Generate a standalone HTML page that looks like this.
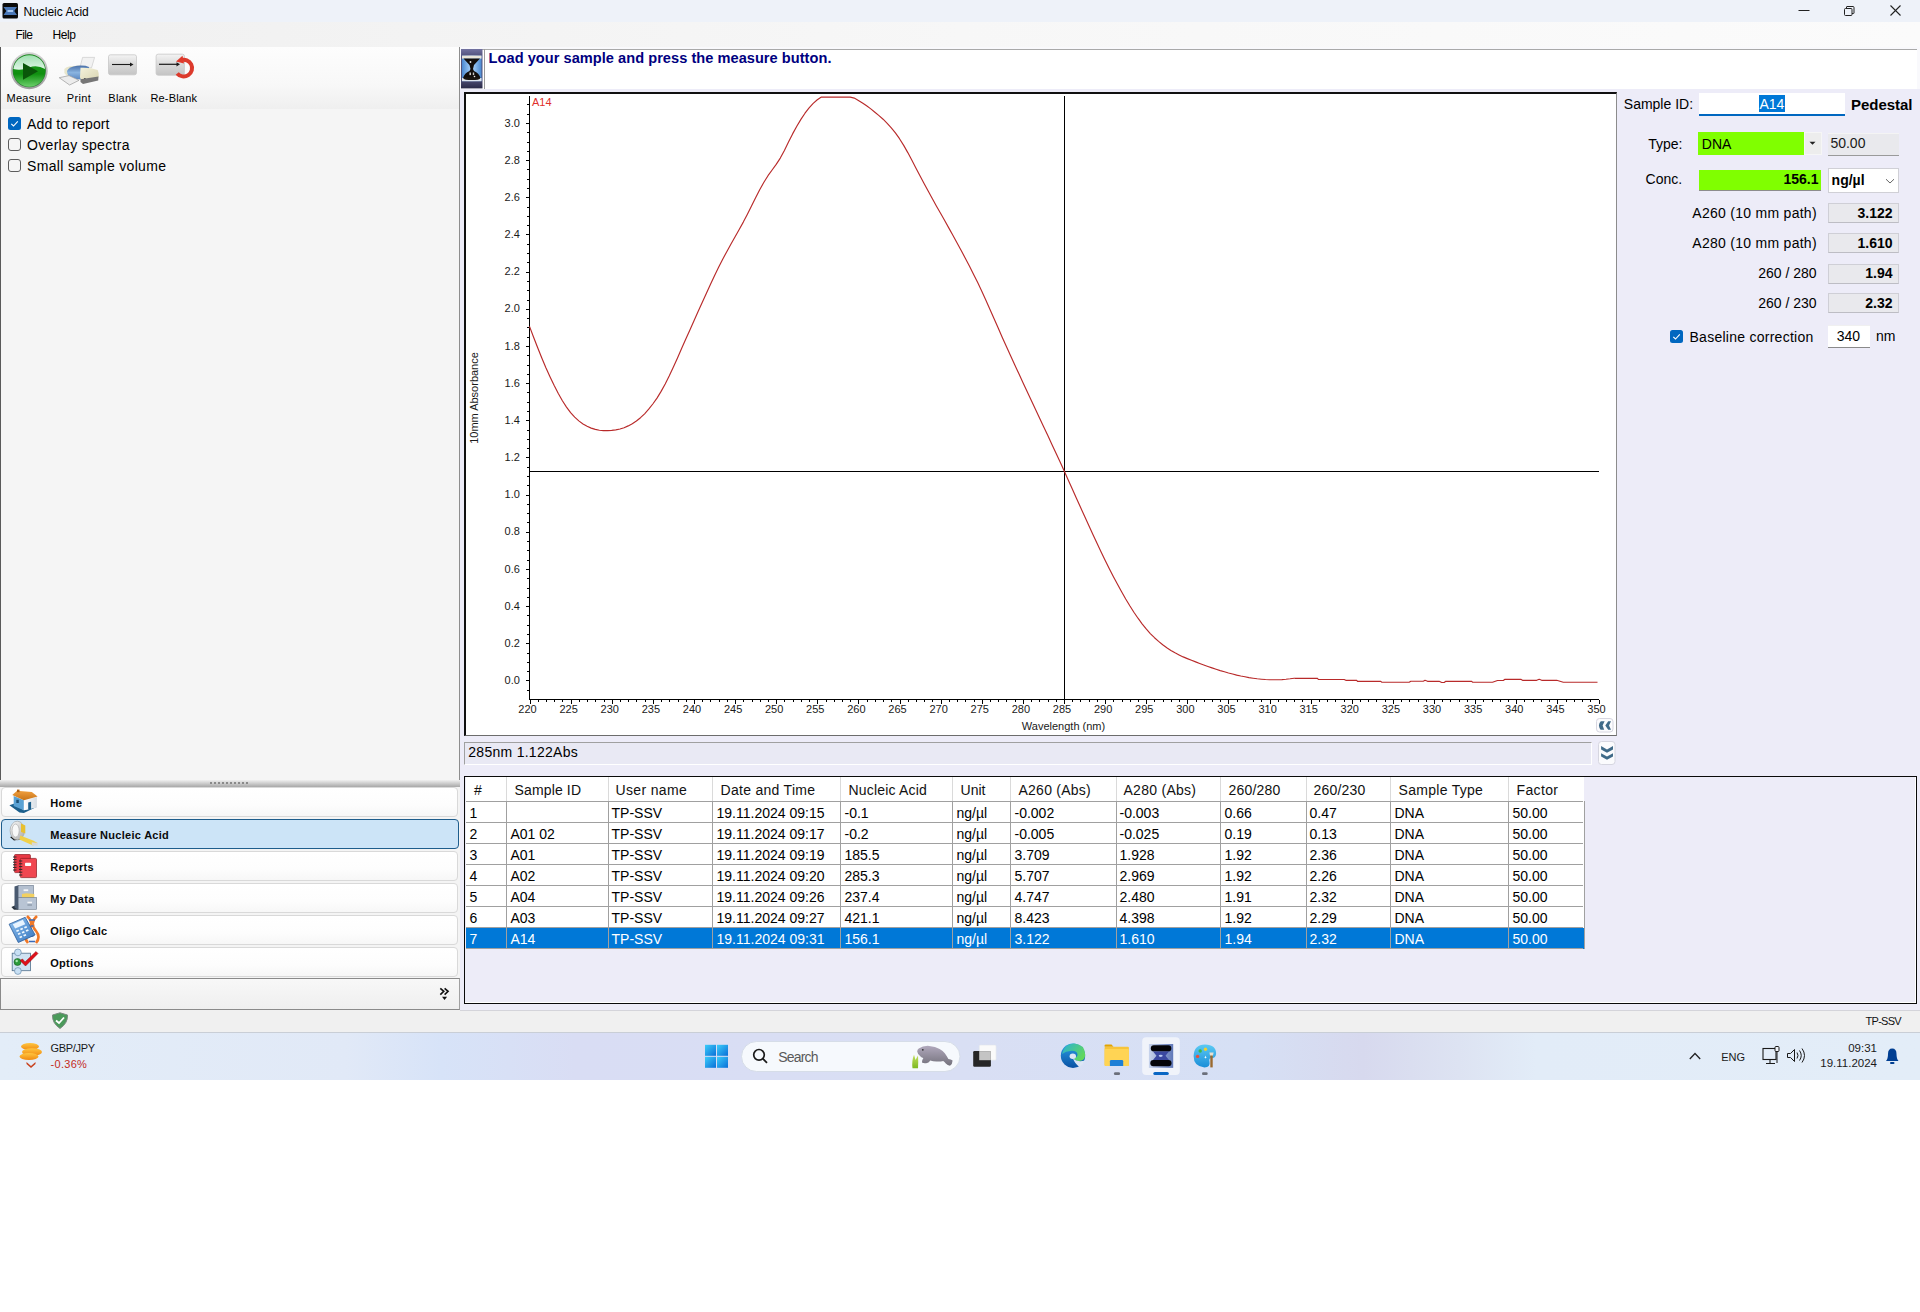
<!DOCTYPE html><html><head><meta charset="utf-8"><title>Nucleic Acid</title><style>
*{margin:0;padding:0;box-sizing:border-box}
html,body{width:1920px;height:1312px;background:#fff;overflow:hidden;font-family:"Liberation Sans",sans-serif;color:#000}
.t{position:absolute;white-space:nowrap}
.r{position:absolute}
svg{position:absolute;overflow:visible}
</style></head><body>
<div class="r" style="left:0px;top:0px;width:1920px;height:22px;background:#eef2f9"></div>
<svg style="left:0;top:0" width="30" height="22"><rect x="2.5" y="3" width="15.5" height="15.5" rx="1.5" fill="#0a0a0a"/>
<path d="M3.5 7 L17 7 L14.5 10.5 L14.5 11.5 L17 15 L3.5 15 L6 11.5 L6 10.5 Z" fill="#4a78b8"/>
<rect x="7.5" y="10" width="5.5" height="2" fill="#a8c8f0"/></svg>
<div class="t" style="top:5.74px;font-size:12px;line-height:12px;left:23.40px;">Nucleic Acid</div>
<svg style="left:1780px;top:0" width="140" height="22">
<line x1="18.5" y1="10.5" x2="29.5" y2="10.5" stroke="#222" stroke-width="1"/>
<rect x="64.5" y="8.5" width="7.5" height="7" rx="1" fill="none" stroke="#222" stroke-width="1"/>
<path d="M66.5 8.5 V7 Q66.5 6.5 67 6.5 H73 Q74 6.5 74 7.5 V13 Q74 13.5 73.5 13.5 H72" fill="none" stroke="#222" stroke-width="1"/>
<line x1="110.5" y1="5.5" x2="120.5" y2="15.5" stroke="#222" stroke-width="1.1"/>
<line x1="120.5" y1="5.5" x2="110.5" y2="15.5" stroke="#222" stroke-width="1.1"/>
</svg>
<div class="r" style="left:0px;top:22px;width:1920px;height:25px;background:linear-gradient(90deg,#f0f0f0 0%,#f7f7f7 50%,#fbfbfb 100%)"></div>
<div class="t" style="top:28.59px;font-size:12px;line-height:12px;letter-spacing:-0.645px;left:15.60px;">File</div>
<div class="t" style="top:28.59px;font-size:12px;line-height:12px;letter-spacing:-0.393px;left:52.50px;">Help</div>
<div class="r" style="left:0px;top:47px;width:460px;height:734px;background:#f5f5f5"></div>
<div class="r" style="left:0px;top:47px;width:459px;height:62px;background:linear-gradient(180deg,#fdfdfd 0%,#f8f8f8 60%,#efefef 100%)"></div>
<div class="r" style="left:0px;top:47px;width:1px;height:734px;background:#5a5a5a"></div>
<div class="r" style="left:459px;top:47px;width:1px;height:734px;background:#8e8e8e"></div>
<svg style="left:0;top:45px" width="210" height="50">
<defs>
<radialGradient id="gm" cx="0.5" cy="0.35" r="0.7"><stop offset="0" stop-color="#a8e8a8"/><stop offset="0.45" stop-color="#3cb83c"/><stop offset="1" stop-color="#118c11"/></radialGradient>
<linearGradient id="gb" x1="0" y1="0" x2="0" y2="1"><stop offset="0" stop-color="#f4f4f4"/><stop offset="0.5" stop-color="#d8d8d8"/><stop offset="1" stop-color="#c4c4c4"/></linearGradient>
</defs>
<defs>
<linearGradient id="ring" x1="0" y1="0" x2="0" y2="1"><stop offset="0" stop-color="#d4d4d4"/><stop offset="1" stop-color="#9c9c9c"/></linearGradient>
<linearGradient id="gtop" x1="0" y1="0" x2="0" y2="1"><stop offset="0" stop-color="#9fe0b0"/><stop offset="1" stop-color="#dff5e6"/></linearGradient>
<linearGradient id="gbot" x1="0" y1="0" x2="0" y2="1"><stop offset="0" stop-color="#1d9a1d"/><stop offset="0.6" stop-color="#109010"/><stop offset="1" stop-color="#6cd06c"/></linearGradient>
<linearGradient id="drum" x1="0" y1="0" x2="0" y2="1"><stop offset="0" stop-color="#4a70a8"/><stop offset="0.5" stop-color="#8ab4e0"/><stop offset="1" stop-color="#5a86c0"/></linearGradient>
<linearGradient id="cream" x1="0" y1="0" x2="1" y2="1"><stop offset="0" stop-color="#f4f2dc"/><stop offset="1" stop-color="#d8d4b0"/></linearGradient>
</defs>
<circle cx="29.25" cy="25.75" r="18.5" fill="url(#ring)"/>
<circle cx="29.25" cy="25.75" r="16.6" fill="#2c7e34"/>
<circle cx="29.25" cy="25.75" r="16" fill="url(#gbot)"/>
<path d="M13.4 24 A16 16 0 0 1 45.1 24 Q37 19.5 29.25 22.5 Q21 26 13.4 24 Z" fill="url(#gtop)"/>
<path d="M23 18.1 L38 26.3 L23 34.8 Z" fill="#0a560a"/>
<!-- printer -->
<path d="M82.6 12.4 L94.6 12.4 L91.5 22.8 L80 22.3 Z" fill="#f2f2f2" stroke="#c4c4c4" stroke-width="0.6"/>
<path d="M64.4 24 Q66 22 70 21.3 L80 20.5 L80.5 33 L70 32.5 Q65.5 30.5 64.4 28 Z" fill="#e8e6cc"/>
<path d="M67 26 Q69 21.5 77 20.7 Q85 20 89 22 L88.3 34.3 Q78 35.5 71 32.5 Q67 30.5 67 26 Z" fill="url(#drum)"/>
<path d="M80.5 22.8 Q90 22.3 97.7 24.9 Q99.2 28 98.75 32.2 L83.1 36.3 Q80 34.5 80 32.2 Z" fill="url(#cream)"/>
<path d="M80.5 34.2 L98.5 31.5 L98.2 35.5 L83 39 L80.5 37 Z" fill="#767676"/>
<path d="M59.2 32.7 L69 30.6 L79 35.3 L69.6 40 Z" fill="#ececec" stroke="#9a9a9a" stroke-width="0.7"/>
<rect x="84" y="33" width="1.6" height="0.9" fill="#555"/>
<!-- blank -->
<rect x="108.5" y="9.8" width="28" height="20" rx="2" fill="url(#gb)" stroke="#c8c8c8" stroke-width="0.8"/>
<line x1="112" y1="19.5" x2="131" y2="19.5" stroke="#1a1a1a" stroke-width="1.1"/>
<path d="M130 17.5 L133.5 19.5 L130 21.5 Z" fill="#1a1a1a"/>
<!-- reblank -->
<rect x="156.1" y="9.2" width="28.3" height="21" rx="2" fill="url(#gb)" stroke="#c8c8c8" stroke-width="0.8"/>
<line x1="159" y1="19.3" x2="177.5" y2="19.3" stroke="#1a1a1a" stroke-width="1.2"/>
<path d="M176.5 17.2 L180 19.3 L176.5 21.4 Z" fill="#1a1a1a"/>
<path d="M180.8 15.2 A8.4 8.4 0 1 1 177.2 28.4" fill="none" stroke="#dc3a2c" stroke-width="4"/>
<path d="M176 16.5 L182.5 10.8 L184 18.5 Z" fill="#e03a2c"/>
</svg>
<div class="t" style="top:93.09px;font-size:11px;line-height:11px;letter-spacing:0.250px;left:6.60px;">Measure</div>
<div class="t" style="top:93.09px;font-size:11px;line-height:11px;letter-spacing:0.371px;left:66.70px;">Print</div>
<div class="t" style="top:93.09px;font-size:11px;line-height:11px;letter-spacing:0.246px;left:108.30px;">Blank</div>
<div class="t" style="top:93.09px;font-size:11px;line-height:11px;letter-spacing:0.194px;left:150.40px;">Re-Blank</div>
<svg style="left:8px;top:117px" width="13" height="13"><rect x="0" y="0" width="13" height="13" rx="2.5" fill="#0067c0"/><path d="M3.3 6.8 L5.5 9 L9.8 4.3" fill="none" stroke="#fff" stroke-width="1.1"/></svg>
<svg style="left:8px;top:138px" width="13" height="13"><rect x="0.5" y="0.5" width="12" height="12" rx="2.5" fill="none" stroke="#5d5d5d" stroke-width="1"/></svg>
<svg style="left:8px;top:159px" width="13" height="13"><rect x="0.5" y="0.5" width="12" height="12" rx="2.5" fill="none" stroke="#5d5d5d" stroke-width="1"/></svg>
<div class="t" style="top:116.90px;font-size:14px;line-height:14px;letter-spacing:0.130px;left:27.00px;">Add to report</div>
<div class="t" style="top:137.90px;font-size:14px;line-height:14px;letter-spacing:0.319px;left:27.00px;">Overlay spectra</div>
<div class="t" style="top:158.90px;font-size:14px;line-height:14px;letter-spacing:0.331px;left:27.00px;">Small sample volume</div>
<div class="r" style="left:460px;top:47px;width:1460px;height:963px;background:#edecf8"></div>
<div class="r" style="left:460px;top:47px;width:1460px;height:42px;background:#f9f9fc"></div>
<div class="r" style="left:461px;top:49px;width:1456px;height:40px;background:#ffffff;border-top:1px solid #a9a9a9"></div>
<div class="r" style="left:484px;top:49px;width:1px;height:40px;background:#9a9a9a"></div>
<svg style="left:461px;top:49px" width="23" height="40">
<defs><linearGradient id="hg" x1="0" y1="0" x2="0" y2="1"><stop offset="0" stop-color="#7272a0"/><stop offset="0.16" stop-color="#555580"/><stop offset="0.8" stop-color="#4a4a70"/><stop offset="1" stop-color="#2a2a48"/></linearGradient>
<linearGradient id="hb" x1="0" y1="0" x2="1" y2="0"><stop offset="0" stop-color="#4a88d0"/><stop offset="0.5" stop-color="#b0d8ff"/><stop offset="1" stop-color="#4a88d0"/></linearGradient></defs>
<rect x="0" y="0" width="21.5" height="39.4" fill="url(#hg)"/>
<rect x="1" y="6.6" width="19.5" height="25.6" fill="url(#hb)"/>
<rect x="1" y="6.6" width="19.5" height="3" fill="#e8e4d8"/>
<path d="M2.5 9.6 L19 9.6 L13 16 L12 20 L13 22 Q18 24 19.5 29 L2 29 Q3.5 24 8.5 22 L9.5 20 L8.5 16 Z" fill="#120e0c"/>
<path d="M1 29 L20.5 29 L20.5 32.2 L1 32.2 Z" fill="#dfe6ee"/>
<ellipse cx="10.75" cy="29.5" rx="8.5" ry="1.6" fill="#1a1612"/>
<circle cx="9.5" cy="13" r="0.9" fill="#e8e8e8"/>
<rect x="8.5" y="23.5" width="1.4" height="2.6" fill="#e0e0e0"/>
<rect x="11.8" y="23.5" width="1.4" height="2.6" fill="#c8c8c8"/>
<circle cx="13.5" cy="27.5" r="0.8" fill="#f0f0f0"/>
</svg>
<div class="t" style="top:51.39px;font-size:14.6px;line-height:14.6px;letter-spacing:0.032px;left:488.60px;font-weight:bold;color:#000080;">Load your sample and press the measure button.</div>
<div class="r" style="left:464px;top:92px;width:1153px;height:644px;background:#fff;border-top:2px solid #101010;border-left:2px solid #101010;border-right:1px solid #8c8c8c;border-bottom:1px solid #6c6c6c"></div>
<svg style="left:0;top:0" width="1920" height="800" shape-rendering="crispEdges">
<line x1="529.5" y1="96" x2="529.5" y2="700" stroke="#000" stroke-width="1"/>
<line x1="529" y1="699.5" x2="1599" y2="699.5" stroke="#000" stroke-width="1"/>
<line x1="527" y1="690.5" x2="529" y2="690.5" stroke="#000"/>
<line x1="526" y1="680.5" x2="529" y2="680.5" stroke="#000"/>
<line x1="527" y1="671.5" x2="529" y2="671.5" stroke="#000"/>
<line x1="527" y1="662.5" x2="529" y2="662.5" stroke="#000"/>
<line x1="527" y1="653.5" x2="529" y2="653.5" stroke="#000"/>
<line x1="526" y1="643.5" x2="529" y2="643.5" stroke="#000"/>
<line x1="527" y1="634.5" x2="529" y2="634.5" stroke="#000"/>
<line x1="527" y1="625.5" x2="529" y2="625.5" stroke="#000"/>
<line x1="527" y1="615.5" x2="529" y2="615.5" stroke="#000"/>
<line x1="526" y1="606.5" x2="529" y2="606.5" stroke="#000"/>
<line x1="527" y1="597.5" x2="529" y2="597.5" stroke="#000"/>
<line x1="527" y1="588.5" x2="529" y2="588.5" stroke="#000"/>
<line x1="527" y1="578.5" x2="529" y2="578.5" stroke="#000"/>
<line x1="526" y1="569.5" x2="529" y2="569.5" stroke="#000"/>
<line x1="527" y1="560.5" x2="529" y2="560.5" stroke="#000"/>
<line x1="527" y1="550.5" x2="529" y2="550.5" stroke="#000"/>
<line x1="527" y1="541.5" x2="529" y2="541.5" stroke="#000"/>
<line x1="526" y1="532.5" x2="529" y2="532.5" stroke="#000"/>
<line x1="527" y1="522.5" x2="529" y2="522.5" stroke="#000"/>
<line x1="527" y1="513.5" x2="529" y2="513.5" stroke="#000"/>
<line x1="527" y1="504.5" x2="529" y2="504.5" stroke="#000"/>
<line x1="526" y1="495.5" x2="529" y2="495.5" stroke="#000"/>
<line x1="527" y1="485.5" x2="529" y2="485.5" stroke="#000"/>
<line x1="527" y1="476.5" x2="529" y2="476.5" stroke="#000"/>
<line x1="527" y1="467.5" x2="529" y2="467.5" stroke="#000"/>
<line x1="526" y1="457.5" x2="529" y2="457.5" stroke="#000"/>
<line x1="527" y1="448.5" x2="529" y2="448.5" stroke="#000"/>
<line x1="527" y1="439.5" x2="529" y2="439.5" stroke="#000"/>
<line x1="527" y1="430.5" x2="529" y2="430.5" stroke="#000"/>
<line x1="526" y1="420.5" x2="529" y2="420.5" stroke="#000"/>
<line x1="527" y1="411.5" x2="529" y2="411.5" stroke="#000"/>
<line x1="527" y1="402.5" x2="529" y2="402.5" stroke="#000"/>
<line x1="527" y1="392.5" x2="529" y2="392.5" stroke="#000"/>
<line x1="526" y1="383.5" x2="529" y2="383.5" stroke="#000"/>
<line x1="527" y1="374.5" x2="529" y2="374.5" stroke="#000"/>
<line x1="527" y1="365.5" x2="529" y2="365.5" stroke="#000"/>
<line x1="527" y1="355.5" x2="529" y2="355.5" stroke="#000"/>
<line x1="526" y1="346.5" x2="529" y2="346.5" stroke="#000"/>
<line x1="527" y1="337.5" x2="529" y2="337.5" stroke="#000"/>
<line x1="527" y1="327.5" x2="529" y2="327.5" stroke="#000"/>
<line x1="527" y1="318.5" x2="529" y2="318.5" stroke="#000"/>
<line x1="526" y1="309.5" x2="529" y2="309.5" stroke="#000"/>
<line x1="527" y1="300.5" x2="529" y2="300.5" stroke="#000"/>
<line x1="527" y1="290.5" x2="529" y2="290.5" stroke="#000"/>
<line x1="527" y1="281.5" x2="529" y2="281.5" stroke="#000"/>
<line x1="526" y1="272.5" x2="529" y2="272.5" stroke="#000"/>
<line x1="527" y1="262.5" x2="529" y2="262.5" stroke="#000"/>
<line x1="527" y1="253.5" x2="529" y2="253.5" stroke="#000"/>
<line x1="527" y1="244.5" x2="529" y2="244.5" stroke="#000"/>
<line x1="526" y1="234.5" x2="529" y2="234.5" stroke="#000"/>
<line x1="527" y1="225.5" x2="529" y2="225.5" stroke="#000"/>
<line x1="527" y1="216.5" x2="529" y2="216.5" stroke="#000"/>
<line x1="527" y1="207.5" x2="529" y2="207.5" stroke="#000"/>
<line x1="526" y1="197.5" x2="529" y2="197.5" stroke="#000"/>
<line x1="527" y1="188.5" x2="529" y2="188.5" stroke="#000"/>
<line x1="527" y1="179.5" x2="529" y2="179.5" stroke="#000"/>
<line x1="527" y1="169.5" x2="529" y2="169.5" stroke="#000"/>
<line x1="526" y1="160.5" x2="529" y2="160.5" stroke="#000"/>
<line x1="527" y1="151.5" x2="529" y2="151.5" stroke="#000"/>
<line x1="527" y1="142.5" x2="529" y2="142.5" stroke="#000"/>
<line x1="527" y1="132.5" x2="529" y2="132.5" stroke="#000"/>
<line x1="526" y1="123.5" x2="529" y2="123.5" stroke="#000"/>
<line x1="527" y1="114.5" x2="529" y2="114.5" stroke="#000"/>
<line x1="527" y1="104.5" x2="529" y2="104.5" stroke="#000"/>
<line x1="530.5" y1="700" x2="530.5" y2="704" stroke="#000"/>
<line x1="538.5" y1="700" x2="538.5" y2="702" stroke="#000"/>
<line x1="546.5" y1="700" x2="546.5" y2="702" stroke="#000"/>
<line x1="554.5" y1="700" x2="554.5" y2="702" stroke="#000"/>
<line x1="562.5" y1="700" x2="562.5" y2="702" stroke="#000"/>
<line x1="571.5" y1="700" x2="571.5" y2="704" stroke="#000"/>
<line x1="579.5" y1="700" x2="579.5" y2="702" stroke="#000"/>
<line x1="587.5" y1="700" x2="587.5" y2="702" stroke="#000"/>
<line x1="595.5" y1="700" x2="595.5" y2="702" stroke="#000"/>
<line x1="604.5" y1="700" x2="604.5" y2="702" stroke="#000"/>
<line x1="612.5" y1="700" x2="612.5" y2="704" stroke="#000"/>
<line x1="620.5" y1="700" x2="620.5" y2="702" stroke="#000"/>
<line x1="628.5" y1="700" x2="628.5" y2="702" stroke="#000"/>
<line x1="636.5" y1="700" x2="636.5" y2="702" stroke="#000"/>
<line x1="645.5" y1="700" x2="645.5" y2="702" stroke="#000"/>
<line x1="653.5" y1="700" x2="653.5" y2="704" stroke="#000"/>
<line x1="661.5" y1="700" x2="661.5" y2="702" stroke="#000"/>
<line x1="669.5" y1="700" x2="669.5" y2="702" stroke="#000"/>
<line x1="678.5" y1="700" x2="678.5" y2="702" stroke="#000"/>
<line x1="686.5" y1="700" x2="686.5" y2="702" stroke="#000"/>
<line x1="694.5" y1="700" x2="694.5" y2="704" stroke="#000"/>
<line x1="702.5" y1="700" x2="702.5" y2="702" stroke="#000"/>
<line x1="710.5" y1="700" x2="710.5" y2="702" stroke="#000"/>
<line x1="719.5" y1="700" x2="719.5" y2="702" stroke="#000"/>
<line x1="727.5" y1="700" x2="727.5" y2="702" stroke="#000"/>
<line x1="735.5" y1="700" x2="735.5" y2="704" stroke="#000"/>
<line x1="743.5" y1="700" x2="743.5" y2="702" stroke="#000"/>
<line x1="752.5" y1="700" x2="752.5" y2="702" stroke="#000"/>
<line x1="760.5" y1="700" x2="760.5" y2="702" stroke="#000"/>
<line x1="768.5" y1="700" x2="768.5" y2="702" stroke="#000"/>
<line x1="776.5" y1="700" x2="776.5" y2="704" stroke="#000"/>
<line x1="784.5" y1="700" x2="784.5" y2="702" stroke="#000"/>
<line x1="793.5" y1="700" x2="793.5" y2="702" stroke="#000"/>
<line x1="801.5" y1="700" x2="801.5" y2="702" stroke="#000"/>
<line x1="809.5" y1="700" x2="809.5" y2="702" stroke="#000"/>
<line x1="817.5" y1="700" x2="817.5" y2="704" stroke="#000"/>
<line x1="826.5" y1="700" x2="826.5" y2="702" stroke="#000"/>
<line x1="834.5" y1="700" x2="834.5" y2="702" stroke="#000"/>
<line x1="842.5" y1="700" x2="842.5" y2="702" stroke="#000"/>
<line x1="850.5" y1="700" x2="850.5" y2="702" stroke="#000"/>
<line x1="858.5" y1="700" x2="858.5" y2="704" stroke="#000"/>
<line x1="867.5" y1="700" x2="867.5" y2="702" stroke="#000"/>
<line x1="875.5" y1="700" x2="875.5" y2="702" stroke="#000"/>
<line x1="883.5" y1="700" x2="883.5" y2="702" stroke="#000"/>
<line x1="891.5" y1="700" x2="891.5" y2="702" stroke="#000"/>
<line x1="900.5" y1="700" x2="900.5" y2="704" stroke="#000"/>
<line x1="908.5" y1="700" x2="908.5" y2="702" stroke="#000"/>
<line x1="916.5" y1="700" x2="916.5" y2="702" stroke="#000"/>
<line x1="924.5" y1="700" x2="924.5" y2="702" stroke="#000"/>
<line x1="932.5" y1="700" x2="932.5" y2="702" stroke="#000"/>
<line x1="941.5" y1="700" x2="941.5" y2="704" stroke="#000"/>
<line x1="949.5" y1="700" x2="949.5" y2="702" stroke="#000"/>
<line x1="957.5" y1="700" x2="957.5" y2="702" stroke="#000"/>
<line x1="965.5" y1="700" x2="965.5" y2="702" stroke="#000"/>
<line x1="974.5" y1="700" x2="974.5" y2="702" stroke="#000"/>
<line x1="982.5" y1="700" x2="982.5" y2="704" stroke="#000"/>
<line x1="990.5" y1="700" x2="990.5" y2="702" stroke="#000"/>
<line x1="998.5" y1="700" x2="998.5" y2="702" stroke="#000"/>
<line x1="1006.5" y1="700" x2="1006.5" y2="702" stroke="#000"/>
<line x1="1015.5" y1="700" x2="1015.5" y2="702" stroke="#000"/>
<line x1="1023.5" y1="700" x2="1023.5" y2="704" stroke="#000"/>
<line x1="1031.5" y1="700" x2="1031.5" y2="702" stroke="#000"/>
<line x1="1039.5" y1="700" x2="1039.5" y2="702" stroke="#000"/>
<line x1="1048.5" y1="700" x2="1048.5" y2="702" stroke="#000"/>
<line x1="1056.5" y1="700" x2="1056.5" y2="702" stroke="#000"/>
<line x1="1064.5" y1="700" x2="1064.5" y2="704" stroke="#000"/>
<line x1="1072.5" y1="700" x2="1072.5" y2="702" stroke="#000"/>
<line x1="1080.5" y1="700" x2="1080.5" y2="702" stroke="#000"/>
<line x1="1089.5" y1="700" x2="1089.5" y2="702" stroke="#000"/>
<line x1="1097.5" y1="700" x2="1097.5" y2="702" stroke="#000"/>
<line x1="1105.5" y1="700" x2="1105.5" y2="704" stroke="#000"/>
<line x1="1113.5" y1="700" x2="1113.5" y2="702" stroke="#000"/>
<line x1="1122.5" y1="700" x2="1122.5" y2="702" stroke="#000"/>
<line x1="1130.5" y1="700" x2="1130.5" y2="702" stroke="#000"/>
<line x1="1138.5" y1="700" x2="1138.5" y2="702" stroke="#000"/>
<line x1="1146.5" y1="700" x2="1146.5" y2="704" stroke="#000"/>
<line x1="1154.5" y1="700" x2="1154.5" y2="702" stroke="#000"/>
<line x1="1163.5" y1="700" x2="1163.5" y2="702" stroke="#000"/>
<line x1="1171.5" y1="700" x2="1171.5" y2="702" stroke="#000"/>
<line x1="1179.5" y1="700" x2="1179.5" y2="702" stroke="#000"/>
<line x1="1187.5" y1="700" x2="1187.5" y2="704" stroke="#000"/>
<line x1="1196.5" y1="700" x2="1196.5" y2="702" stroke="#000"/>
<line x1="1204.5" y1="700" x2="1204.5" y2="702" stroke="#000"/>
<line x1="1212.5" y1="700" x2="1212.5" y2="702" stroke="#000"/>
<line x1="1220.5" y1="700" x2="1220.5" y2="702" stroke="#000"/>
<line x1="1228.5" y1="700" x2="1228.5" y2="704" stroke="#000"/>
<line x1="1237.5" y1="700" x2="1237.5" y2="702" stroke="#000"/>
<line x1="1245.5" y1="700" x2="1245.5" y2="702" stroke="#000"/>
<line x1="1253.5" y1="700" x2="1253.5" y2="702" stroke="#000"/>
<line x1="1261.5" y1="700" x2="1261.5" y2="702" stroke="#000"/>
<line x1="1270.5" y1="700" x2="1270.5" y2="704" stroke="#000"/>
<line x1="1278.5" y1="700" x2="1278.5" y2="702" stroke="#000"/>
<line x1="1286.5" y1="700" x2="1286.5" y2="702" stroke="#000"/>
<line x1="1294.5" y1="700" x2="1294.5" y2="702" stroke="#000"/>
<line x1="1302.5" y1="700" x2="1302.5" y2="702" stroke="#000"/>
<line x1="1311.5" y1="700" x2="1311.5" y2="704" stroke="#000"/>
<line x1="1319.5" y1="700" x2="1319.5" y2="702" stroke="#000"/>
<line x1="1327.5" y1="700" x2="1327.5" y2="702" stroke="#000"/>
<line x1="1335.5" y1="700" x2="1335.5" y2="702" stroke="#000"/>
<line x1="1344.5" y1="700" x2="1344.5" y2="702" stroke="#000"/>
<line x1="1352.5" y1="700" x2="1352.5" y2="704" stroke="#000"/>
<line x1="1360.5" y1="700" x2="1360.5" y2="702" stroke="#000"/>
<line x1="1368.5" y1="700" x2="1368.5" y2="702" stroke="#000"/>
<line x1="1376.5" y1="700" x2="1376.5" y2="702" stroke="#000"/>
<line x1="1385.5" y1="700" x2="1385.5" y2="702" stroke="#000"/>
<line x1="1393.5" y1="700" x2="1393.5" y2="704" stroke="#000"/>
<line x1="1401.5" y1="700" x2="1401.5" y2="702" stroke="#000"/>
<line x1="1409.5" y1="700" x2="1409.5" y2="702" stroke="#000"/>
<line x1="1418.5" y1="700" x2="1418.5" y2="702" stroke="#000"/>
<line x1="1426.5" y1="700" x2="1426.5" y2="702" stroke="#000"/>
<line x1="1434.5" y1="700" x2="1434.5" y2="704" stroke="#000"/>
<line x1="1442.5" y1="700" x2="1442.5" y2="702" stroke="#000"/>
<line x1="1450.5" y1="700" x2="1450.5" y2="702" stroke="#000"/>
<line x1="1459.5" y1="700" x2="1459.5" y2="702" stroke="#000"/>
<line x1="1467.5" y1="700" x2="1467.5" y2="702" stroke="#000"/>
<line x1="1475.5" y1="700" x2="1475.5" y2="704" stroke="#000"/>
<line x1="1483.5" y1="700" x2="1483.5" y2="702" stroke="#000"/>
<line x1="1492.5" y1="700" x2="1492.5" y2="702" stroke="#000"/>
<line x1="1500.5" y1="700" x2="1500.5" y2="702" stroke="#000"/>
<line x1="1508.5" y1="700" x2="1508.5" y2="702" stroke="#000"/>
<line x1="1516.5" y1="700" x2="1516.5" y2="704" stroke="#000"/>
<line x1="1524.5" y1="700" x2="1524.5" y2="702" stroke="#000"/>
<line x1="1533.5" y1="700" x2="1533.5" y2="702" stroke="#000"/>
<line x1="1541.5" y1="700" x2="1541.5" y2="702" stroke="#000"/>
<line x1="1549.5" y1="700" x2="1549.5" y2="702" stroke="#000"/>
<line x1="1557.5" y1="700" x2="1557.5" y2="704" stroke="#000"/>
<line x1="1566.5" y1="700" x2="1566.5" y2="702" stroke="#000"/>
<line x1="1574.5" y1="700" x2="1574.5" y2="702" stroke="#000"/>
<line x1="1582.5" y1="700" x2="1582.5" y2="702" stroke="#000"/>
<line x1="1590.5" y1="700" x2="1590.5" y2="702" stroke="#000"/>
<line x1="1599.5" y1="700" x2="1599.5" y2="704" stroke="#000"/>
<line x1="1064.5" y1="96" x2="1064.5" y2="699" stroke="#000"/>
<line x1="530" y1="471.5" x2="1599" y2="471.5" stroke="#000"/>
</svg>
<svg style="left:0;top:0" width="1920" height="800"><path d="M529.5 326.4 L533.6 337.2 L537.7 347.8 L541.8 358.0 L545.9 367.7 L550.1 376.9 L554.2 385.5 L558.3 393.5 L562.4 400.7 L566.5 407.1 L570.6 412.6 L574.7 417.1 L578.8 420.9 L583.0 424.0 L587.1 426.3 L591.2 428.1 L595.3 429.4 L599.4 430.2 L603.5 430.6 L607.6 430.6 L611.7 430.4 L615.8 429.9 L620.0 429.0 L624.1 427.7 L628.2 425.9 L632.3 423.7 L636.4 421.0 L640.5 417.7 L644.6 413.8 L648.7 409.2 L652.8 404.0 L657.0 398.1 L661.1 391.4 L665.2 384.0 L669.3 375.8 L673.4 367.0 L677.5 357.9 L681.6 348.5 L685.7 339.2 L689.9 329.9 L694.0 320.7 L698.1 311.6 L702.2 302.5 L706.3 293.4 L710.4 284.5 L714.5 275.8 L718.6 267.3 L722.7 259.2 L726.9 251.4 L731.0 244.0 L735.1 236.8 L739.2 229.5 L743.3 222.1 L747.4 214.2 L751.5 206.0 L755.6 197.7 L759.7 189.8 L763.9 182.3 L768.0 175.7 L772.1 170.0 L776.2 164.4 L780.3 158.1 L784.4 150.4 L788.5 142.1 L792.6 133.9 L796.8 126.3 L800.9 119.4 L805.0 113.2 L809.1 107.9 L813.2 103.4 L817.3 99.8 L821.4 97.1 L825.5 97.1 L829.6 97.1 L833.8 97.1 L837.9 97.1 L842.0 97.1 L846.1 97.1 L850.2 97.1 L854.3 98.1 L858.4 100.4 L862.5 103.0 L866.6 105.8 L870.8 108.9 L874.9 112.2 L879.0 115.6 L883.1 119.2 L887.2 123.3 L891.3 127.8 L895.4 132.9 L899.5 138.7 L903.7 145.4 L907.8 152.6 L911.9 160.3 L916.0 168.2 L920.1 176.0 L924.2 183.8 L928.3 191.3 L932.4 198.8 L936.5 206.2 L940.7 213.5 L944.8 220.8 L948.9 228.1 L953.0 235.5 L957.1 243.0 L961.2 250.5 L965.3 258.2 L969.4 266.1 L973.5 274.2 L977.7 282.6 L981.8 291.2 L985.9 300.2 L990.0 309.4 L994.1 318.7 L998.2 328.1 L1002.3 337.5 L1006.4 346.6 L1010.6 355.7 L1014.7 364.7 L1018.8 373.6 L1022.9 382.5 L1027.0 391.3 L1031.1 400.1 L1035.2 408.8 L1039.3 417.6 L1043.4 426.3 L1047.6 435.1 L1051.7 443.9 L1055.8 452.7 L1059.9 461.6 L1064.0 470.6 L1068.1 479.7 L1072.2 488.8 L1076.3 497.9 L1080.4 507.1 L1084.6 516.2 L1088.7 525.2 L1092.8 534.2 L1096.9 543.0 L1101.0 551.7 L1105.1 560.2 L1109.2 568.5 L1113.3 576.5 L1117.5 584.3 L1121.6 591.8 L1125.7 599.0 L1129.8 605.8 L1133.9 612.2 L1138.0 618.2 L1142.1 623.8 L1146.2 628.9 L1150.3 633.6 L1154.5 637.7 L1158.6 641.4 L1162.7 644.8 L1166.8 647.7 L1170.9 650.4 L1175.0 652.8 L1179.1 654.9 L1183.2 656.9 L1187.3 658.6 L1191.5 660.3 L1195.6 661.9 L1199.7 663.5 L1203.8 665.0 L1207.9 666.5 L1212.0 667.9 L1216.1 669.2 L1220.2 670.6 L1224.4 671.8 L1228.5 673.0 L1232.6 674.0 L1236.7 675.1 L1240.8 676.0 L1244.9 676.8 L1249.0 677.6 L1253.1 678.2 L1257.2 678.8 L1261.4 679.2 L1265.5 679.5 L1269.6 679.7 L1273.7 679.8 L1277.8 679.7 L1281.9 679.6 L1286.0 679.3 L1290.1 678.8 L1294.2 678.2 L1295 678.3 L1317.5 678.3 L1318.3 679.5 L1344.2 679.5 L1345.8 680.3 L1356.7 680.3 L1357.5 681.3 L1380.8 681.3 L1381.7 682.2 L1409.2 682.2 L1410.8 681.2 L1423.3 681.2 L1425.0 680.3 L1427.5 681.3 L1439.2 681.3 L1441.7 682.5 L1444.2 682.5 L1445.8 681.3 L1471.7 681.3 L1472.5 682.2 L1492.5 682.2 L1497.5 680.5 L1503.3 680.5 L1505.0 679.3 L1520.8 679.3 L1522.5 680.3 L1536.7 680.3 L1539.2 679.3 L1541.7 680.3 L1556.7 680.3 L1563.3 682.2 L1597.5 682.2" fill="none" stroke="#b82a2a" stroke-width="1.15" stroke-linejoin="round"/></svg>
<div class="t" style="top:675.04px;font-size:11px;line-height:11px;right:1400.20px;text-align:right;color:#1a1a1a;">0.0</div>
<div class="t" style="top:637.88px;font-size:11px;line-height:11px;right:1400.20px;text-align:right;color:#1a1a1a;">0.2</div>
<div class="t" style="top:600.72px;font-size:11px;line-height:11px;right:1400.20px;text-align:right;color:#1a1a1a;">0.4</div>
<div class="t" style="top:563.56px;font-size:11px;line-height:11px;right:1400.20px;text-align:right;color:#1a1a1a;">0.6</div>
<div class="t" style="top:526.40px;font-size:11px;line-height:11px;right:1400.20px;text-align:right;color:#1a1a1a;">0.8</div>
<div class="t" style="top:489.24px;font-size:11px;line-height:11px;right:1400.20px;text-align:right;color:#1a1a1a;">1.0</div>
<div class="t" style="top:452.08px;font-size:11px;line-height:11px;right:1400.20px;text-align:right;color:#1a1a1a;">1.2</div>
<div class="t" style="top:414.92px;font-size:11px;line-height:11px;right:1400.20px;text-align:right;color:#1a1a1a;">1.4</div>
<div class="t" style="top:377.76px;font-size:11px;line-height:11px;right:1400.20px;text-align:right;color:#1a1a1a;">1.6</div>
<div class="t" style="top:340.60px;font-size:11px;line-height:11px;right:1400.20px;text-align:right;color:#1a1a1a;">1.8</div>
<div class="t" style="top:303.44px;font-size:11px;line-height:11px;right:1400.20px;text-align:right;color:#1a1a1a;">2.0</div>
<div class="t" style="top:266.28px;font-size:11px;line-height:11px;right:1400.20px;text-align:right;color:#1a1a1a;">2.2</div>
<div class="t" style="top:229.12px;font-size:11px;line-height:11px;right:1400.20px;text-align:right;color:#1a1a1a;">2.4</div>
<div class="t" style="top:191.96px;font-size:11px;line-height:11px;right:1400.20px;text-align:right;color:#1a1a1a;">2.6</div>
<div class="t" style="top:154.80px;font-size:11px;line-height:11px;right:1400.20px;text-align:right;color:#1a1a1a;">2.8</div>
<div class="t" style="top:117.64px;font-size:11px;line-height:11px;right:1400.20px;text-align:right;color:#1a1a1a;">3.0</div>
<div class="t" style="top:704.29px;font-size:11px;line-height:11px;left:327.50px;width:400px;text-align:center;color:#1a1a1a;">220</div>
<div class="t" style="top:704.29px;font-size:11px;line-height:11px;left:368.62px;width:400px;text-align:center;color:#1a1a1a;">225</div>
<div class="t" style="top:704.29px;font-size:11px;line-height:11px;left:409.73px;width:400px;text-align:center;color:#1a1a1a;">230</div>
<div class="t" style="top:704.29px;font-size:11px;line-height:11px;left:450.85px;width:400px;text-align:center;color:#1a1a1a;">235</div>
<div class="t" style="top:704.29px;font-size:11px;line-height:11px;left:491.96px;width:400px;text-align:center;color:#1a1a1a;">240</div>
<div class="t" style="top:704.29px;font-size:11px;line-height:11px;left:533.08px;width:400px;text-align:center;color:#1a1a1a;">245</div>
<div class="t" style="top:704.29px;font-size:11px;line-height:11px;left:574.19px;width:400px;text-align:center;color:#1a1a1a;">250</div>
<div class="t" style="top:704.29px;font-size:11px;line-height:11px;left:615.31px;width:400px;text-align:center;color:#1a1a1a;">255</div>
<div class="t" style="top:704.29px;font-size:11px;line-height:11px;left:656.42px;width:400px;text-align:center;color:#1a1a1a;">260</div>
<div class="t" style="top:704.29px;font-size:11px;line-height:11px;left:697.54px;width:400px;text-align:center;color:#1a1a1a;">265</div>
<div class="t" style="top:704.29px;font-size:11px;line-height:11px;left:738.65px;width:400px;text-align:center;color:#1a1a1a;">270</div>
<div class="t" style="top:704.29px;font-size:11px;line-height:11px;left:779.77px;width:400px;text-align:center;color:#1a1a1a;">275</div>
<div class="t" style="top:704.29px;font-size:11px;line-height:11px;left:820.89px;width:400px;text-align:center;color:#1a1a1a;">280</div>
<div class="t" style="top:704.29px;font-size:11px;line-height:11px;left:862.00px;width:400px;text-align:center;color:#1a1a1a;">285</div>
<div class="t" style="top:704.29px;font-size:11px;line-height:11px;left:903.12px;width:400px;text-align:center;color:#1a1a1a;">290</div>
<div class="t" style="top:704.29px;font-size:11px;line-height:11px;left:944.23px;width:400px;text-align:center;color:#1a1a1a;">295</div>
<div class="t" style="top:704.29px;font-size:11px;line-height:11px;left:985.35px;width:400px;text-align:center;color:#1a1a1a;">300</div>
<div class="t" style="top:704.29px;font-size:11px;line-height:11px;left:1026.46px;width:400px;text-align:center;color:#1a1a1a;">305</div>
<div class="t" style="top:704.29px;font-size:11px;line-height:11px;left:1067.58px;width:400px;text-align:center;color:#1a1a1a;">310</div>
<div class="t" style="top:704.29px;font-size:11px;line-height:11px;left:1108.69px;width:400px;text-align:center;color:#1a1a1a;">315</div>
<div class="t" style="top:704.29px;font-size:11px;line-height:11px;left:1149.81px;width:400px;text-align:center;color:#1a1a1a;">320</div>
<div class="t" style="top:704.29px;font-size:11px;line-height:11px;left:1190.93px;width:400px;text-align:center;color:#1a1a1a;">325</div>
<div class="t" style="top:704.29px;font-size:11px;line-height:11px;left:1232.04px;width:400px;text-align:center;color:#1a1a1a;">330</div>
<div class="t" style="top:704.29px;font-size:11px;line-height:11px;left:1273.16px;width:400px;text-align:center;color:#1a1a1a;">335</div>
<div class="t" style="top:704.29px;font-size:11px;line-height:11px;left:1314.27px;width:400px;text-align:center;color:#1a1a1a;">340</div>
<div class="t" style="top:704.29px;font-size:11px;line-height:11px;left:1355.39px;width:400px;text-align:center;color:#1a1a1a;">345</div>
<div class="t" style="top:704.29px;font-size:11px;line-height:11px;left:1396.50px;width:400px;text-align:center;color:#1a1a1a;">350</div>
<div class="t" style="left:474px;top:398.2px;font-size:11px;line-height:11px;color:#1a1a1a;transform:translate(-50%,-50%) rotate(-90deg)">10mm Absorbance</div>
<div class="t" style="top:721.29px;font-size:11px;line-height:11px;left:863.50px;width:400px;text-align:center;color:#1a1a1a;">Wavelength (nm)</div>
<div class="t" style="top:97.39px;font-size:11px;line-height:11px;left:532.00px;color:#e0302c;">A14</div>
<svg style="left:1596px;top:718px" width="18" height="15"><rect x="0.5" y="0.5" width="16.5" height="13.5" rx="3" fill="#fbfbfd" stroke="#d6d6e0"/>
<path d="M8.6 3.3 L4.8 3.3 Q2.8 5.3 2.9 7.4 Q3.1 9.6 4.6 11.7 L8.2 11.7 L6.6 7.4 Z M15 3.3 L12.2 3.3 L9.3 7.4 L12.2 11.7 L15 11.7 L13 7.4 Z" fill="#3f6a88"/></svg>
<div class="r" style="left:464px;top:742px;width:1128px;height:23px;background:#e9e9f4;border-top:1px solid #a0a0a0;border-left:1px solid #a0a0a0;border-right:1px solid #fff;border-bottom:1px solid #fff"></div>
<div class="t" style="top:744.75px;font-size:14px;line-height:14px;letter-spacing:0.273px;left:468.30px;">285nm 1.122Abs</div>
<svg style="left:1598px;top:741px" width="19" height="25"><rect x="0.5" y="0.5" width="16.5" height="23" rx="3" fill="#fbfbfd" stroke="#d6d6e0"/>
<path d="M3.1 5.1 L9 8.4 L15 5.1 L15 8.4 L9 11.7 L3.1 8.4 Z M3.1 12.2 L9 15.4 L15 12.2 L15 15.5 L9 18.8 L3.1 15.5 Z" fill="#3f6a88"/></svg>
<div class="t" style="top:97.05px;font-size:14px;line-height:14px;left:1623.80px;">Sample ID:</div>
<div class="r" style="left:1699px;top:93px;width:146px;height:23px;background:#fff;border-bottom:2px solid #0067c0"></div>
<div class="r" style="left:1759px;top:95px;width:25.5px;height:16.5px;background:#0078d7"></div>
<div class="t" style="top:97.05px;font-size:14px;line-height:14px;left:1759.50px;color:#fff;">A14</div>
<div class="t" style="top:96.60px;font-size:15px;line-height:15px;letter-spacing:-0.057px;left:1851.10px;font-weight:bold;">Pedestal</div>
<div class="t" style="top:136.85px;font-size:14px;line-height:14px;left:1648.20px;">Type:</div>
<div class="r" style="left:1698px;top:132px;width:106px;height:23px;background:#80ff00"></div>
<div class="r" style="left:1804px;top:132px;width:18px;height:23px;background:#ededed;border:1px solid #f6f6f6"></div>
<svg style="left:1809px;top:141px" width="8" height="5"><path d="M0.5 0.8 L6.5 0.8 L3.5 3.8 Z" fill="#222"/></svg>
<div class="t" style="top:136.85px;font-size:14px;line-height:14px;left:1701.80px;">DNA</div>
<div class="r" style="left:1827.5px;top:132.5px;width:71px;height:23px;background:#e9e9ed;border-bottom:1px solid #9a9a9a;border-top:1px solid #f4f4f4"></div>
<div class="t" style="top:136.45px;font-size:14px;line-height:14px;left:1830.40px;color:#1a1a1a;">50.00</div>
<div class="t" style="top:172.15px;font-size:14px;line-height:14px;left:1645.60px;">Conc.</div>
<div class="r" style="left:1698.5px;top:169.5px;width:122px;height:21.5px;background:#80ff00;border-bottom:1px solid #8c8c8c"></div>
<div class="t" style="top:172.35px;font-size:14px;line-height:14px;right:101.50px;text-align:right;font-weight:bold;">156.1</div>
<div class="r" style="left:1827.5px;top:167.5px;width:71px;height:25px;background:#fff;border:1px solid #d0d0d6"></div>
<div class="t" style="top:173.15px;font-size:14px;line-height:14px;left:1831.60px;font-weight:bold;">ng/&micro;l</div>
<svg style="left:1885px;top:178.3px" width="10" height="7"><path d="M1 1.2 L5 5 L9 1.2" fill="none" stroke="#555" stroke-width="0.9"/></svg>
<div class="r" style="left:1827.5px;top:203.2px;width:71px;height:20px;background:#e9e9ed;border:1px solid #cfcfd6;border-bottom-color:#bdbdc4"></div>
<div class="t" style="top:205.95px;font-size:14px;line-height:14px;letter-spacing:0.279px;margin-right:-0.279px;right:103.40px;text-align:right;">A260 (10 mm path)</div>
<div class="t" style="top:205.95px;font-size:14px;line-height:14px;right:27.50px;text-align:right;font-weight:bold;">3.122</div>
<div class="r" style="left:1827.5px;top:233.4px;width:71px;height:20px;background:#e9e9ed;border:1px solid #cfcfd6;border-bottom-color:#bdbdc4"></div>
<div class="t" style="top:236.15px;font-size:14px;line-height:14px;letter-spacing:0.279px;margin-right:-0.279px;right:103.40px;text-align:right;">A280 (10 mm path)</div>
<div class="t" style="top:236.15px;font-size:14px;line-height:14px;right:27.50px;text-align:right;font-weight:bold;">1.610</div>
<div class="r" style="left:1827.5px;top:263.5px;width:71px;height:20px;background:#e9e9ed;border:1px solid #cfcfd6;border-bottom-color:#bdbdc4"></div>
<div class="t" style="top:266.25px;font-size:14px;line-height:14px;right:103.40px;text-align:right;">260 / 280</div>
<div class="t" style="top:266.25px;font-size:14px;line-height:14px;right:27.50px;text-align:right;font-weight:bold;">1.94</div>
<div class="r" style="left:1827.5px;top:293.3px;width:71px;height:20px;background:#e9e9ed;border:1px solid #cfcfd6;border-bottom-color:#bdbdc4"></div>
<div class="t" style="top:296.05px;font-size:14px;line-height:14px;right:103.40px;text-align:right;">260 / 230</div>
<div class="t" style="top:296.05px;font-size:14px;line-height:14px;right:27.50px;text-align:right;font-weight:bold;">2.32</div>
<svg style="left:1670px;top:330px" width="13" height="13"><rect x="0" y="0" width="13" height="13" rx="2.5" fill="#0067c0"/><path d="M3.3 6.8 L5.5 9 L9.8 4.3" fill="none" stroke="#fff" stroke-width="1.1"/></svg>
<div class="t" style="top:329.95px;font-size:14px;line-height:14px;letter-spacing:0.263px;left:1689.50px;">Baseline correction</div>
<div class="r" style="left:1828px;top:325px;width:42px;height:23px;background:#fff;border-bottom:1px solid #8a8a8a;border-top:1px solid #f0f0f0"></div>
<div class="t" style="top:328.55px;font-size:14px;line-height:14px;left:1836.80px;">340</div>
<div class="t" style="top:329.35px;font-size:14px;line-height:14px;left:1876.00px;">nm</div>
<div class="r" style="left:464px;top:776px;width:1453px;height:228px;background:#edecf8;border:1px solid #0a0a0a;box-shadow:inset -1px -1px 0 #ffffff"></div>
<div class="r" style="left:466px;top:777px;width:1118px;height:172px;background:#fff"></div>
<div class="r" style="left:1010.5px;top:927.5px;width:0px;height:0px;"></div>
<div class="r" style="left:466px;top:928px;width:1118px;height:21px;background:#0078d7"></div>
<svg style="left:0;top:0" width="1920" height="1000" shape-rendering="crispEdges">
<line x1="506" y1="777" x2="506" y2="801" stroke="#dadada"/>
<line x1="506" y1="801" x2="506" y2="949" stroke="#a0a0a0"/>
<line x1="608" y1="777" x2="608" y2="801" stroke="#dadada"/>
<line x1="608" y1="801" x2="608" y2="949" stroke="#a0a0a0"/>
<line x1="712" y1="777" x2="712" y2="801" stroke="#dadada"/>
<line x1="712" y1="801" x2="712" y2="949" stroke="#a0a0a0"/>
<line x1="840" y1="777" x2="840" y2="801" stroke="#dadada"/>
<line x1="840" y1="801" x2="840" y2="949" stroke="#a0a0a0"/>
<line x1="952" y1="777" x2="952" y2="801" stroke="#dadada"/>
<line x1="952" y1="801" x2="952" y2="949" stroke="#a0a0a0"/>
<line x1="1010" y1="777" x2="1010" y2="801" stroke="#dadada"/>
<line x1="1010" y1="801" x2="1010" y2="949" stroke="#a0a0a0"/>
<line x1="1116" y1="777" x2="1116" y2="801" stroke="#dadada"/>
<line x1="1116" y1="801" x2="1116" y2="949" stroke="#a0a0a0"/>
<line x1="1220" y1="777" x2="1220" y2="801" stroke="#dadada"/>
<line x1="1220" y1="801" x2="1220" y2="949" stroke="#a0a0a0"/>
<line x1="1306" y1="777" x2="1306" y2="801" stroke="#dadada"/>
<line x1="1306" y1="801" x2="1306" y2="949" stroke="#a0a0a0"/>
<line x1="1390" y1="777" x2="1390" y2="801" stroke="#dadada"/>
<line x1="1390" y1="801" x2="1390" y2="949" stroke="#a0a0a0"/>
<line x1="1508" y1="777" x2="1508" y2="801" stroke="#dadada"/>
<line x1="1508" y1="801" x2="1508" y2="949" stroke="#a0a0a0"/>
<line x1="1584" y1="801" x2="1584" y2="949" stroke="#a0a0a0"/>
<line x1="466" y1="801.5" x2="1583" y2="801.5" stroke="#a0a0a0"/>
<line x1="466" y1="822.5" x2="1583" y2="822.5" stroke="#a0a0a0"/>
<line x1="466" y1="843.5" x2="1583" y2="843.5" stroke="#a0a0a0"/>
<line x1="466" y1="864.5" x2="1583" y2="864.5" stroke="#a0a0a0"/>
<line x1="466" y1="885.5" x2="1583" y2="885.5" stroke="#a0a0a0"/>
<line x1="466" y1="906.5" x2="1583" y2="906.5" stroke="#a0a0a0"/>
<line x1="466" y1="927.5" x2="1583" y2="927.5" stroke="#a0a0a0"/>
<line x1="466" y1="948.5" x2="1583" y2="948.5" stroke="#a0a0a0"/>
</svg>
<div class="t" style="top:783.15px;font-size:14px;line-height:14px;left:474.00px;color:#111;">#</div>
<div class="t" style="top:783.15px;font-size:14px;line-height:14px;letter-spacing:0.143px;left:514.50px;color:#111;">Sample ID</div>
<div class="t" style="top:783.15px;font-size:14px;line-height:14px;letter-spacing:0.354px;left:615.50px;color:#111;">User name</div>
<div class="t" style="top:783.15px;font-size:14px;line-height:14px;letter-spacing:0.296px;left:720.50px;color:#111;">Date and Time</div>
<div class="t" style="top:783.15px;font-size:14px;line-height:14px;letter-spacing:0.177px;left:848.50px;color:#111;">Nucleic Acid</div>
<div class="t" style="top:783.15px;font-size:14px;line-height:14px;letter-spacing:0.034px;left:960.50px;color:#111;">Unit</div>
<div class="t" style="top:783.15px;font-size:14px;line-height:14px;letter-spacing:0.241px;left:1018.50px;color:#111;">A260 (Abs)</div>
<div class="t" style="top:783.15px;font-size:14px;line-height:14px;letter-spacing:0.274px;left:1123.50px;color:#111;">A280 (Abs)</div>
<div class="t" style="top:783.15px;font-size:14px;line-height:14px;letter-spacing:0.182px;left:1228.50px;color:#111;">260/280</div>
<div class="t" style="top:783.15px;font-size:14px;line-height:14px;letter-spacing:0.182px;left:1313.50px;color:#111;">260/230</div>
<div class="t" style="top:783.15px;font-size:14px;line-height:14px;letter-spacing:0.294px;left:1398.50px;color:#111;">Sample Type</div>
<div class="t" style="top:783.15px;font-size:14px;line-height:14px;letter-spacing:0.365px;left:1516.50px;color:#111;">Factor</div>
<div class="t" style="top:806.05px;font-size:14px;line-height:14px;left:469.40px;color:#000;">1</div>
<div class="t" style="top:806.05px;font-size:14px;line-height:14px;left:510.50px;color:#000;"></div>
<div class="t" style="top:806.05px;font-size:14px;line-height:14px;left:611.50px;color:#000;">TP-SSV</div>
<div class="t" style="top:806.05px;font-size:14px;line-height:14px;left:716.50px;color:#000;">19.11.2024 09:15</div>
<div class="t" style="top:806.05px;font-size:14px;line-height:14px;left:844.50px;color:#000;">-0.1</div>
<div class="t" style="top:806.05px;font-size:14px;line-height:14px;left:956.50px;color:#000;">ng/&micro;l</div>
<div class="t" style="top:806.05px;font-size:14px;line-height:14px;left:1014.50px;color:#000;">-0.002</div>
<div class="t" style="top:806.05px;font-size:14px;line-height:14px;left:1119.50px;color:#000;">-0.003</div>
<div class="t" style="top:806.05px;font-size:14px;line-height:14px;left:1224.50px;color:#000;">0.66</div>
<div class="t" style="top:806.05px;font-size:14px;line-height:14px;left:1309.50px;color:#000;">0.47</div>
<div class="t" style="top:806.05px;font-size:14px;line-height:14px;left:1394.50px;color:#000;">DNA</div>
<div class="t" style="top:806.05px;font-size:14px;line-height:14px;left:1512.50px;color:#000;">50.00</div>
<div class="t" style="top:827.05px;font-size:14px;line-height:14px;left:469.40px;color:#000;">2</div>
<div class="t" style="top:827.05px;font-size:14px;line-height:14px;left:510.50px;color:#000;">A01 02</div>
<div class="t" style="top:827.05px;font-size:14px;line-height:14px;left:611.50px;color:#000;">TP-SSV</div>
<div class="t" style="top:827.05px;font-size:14px;line-height:14px;left:716.50px;color:#000;">19.11.2024 09:17</div>
<div class="t" style="top:827.05px;font-size:14px;line-height:14px;left:844.50px;color:#000;">-0.2</div>
<div class="t" style="top:827.05px;font-size:14px;line-height:14px;left:956.50px;color:#000;">ng/&micro;l</div>
<div class="t" style="top:827.05px;font-size:14px;line-height:14px;left:1014.50px;color:#000;">-0.005</div>
<div class="t" style="top:827.05px;font-size:14px;line-height:14px;left:1119.50px;color:#000;">-0.025</div>
<div class="t" style="top:827.05px;font-size:14px;line-height:14px;left:1224.50px;color:#000;">0.19</div>
<div class="t" style="top:827.05px;font-size:14px;line-height:14px;left:1309.50px;color:#000;">0.13</div>
<div class="t" style="top:827.05px;font-size:14px;line-height:14px;left:1394.50px;color:#000;">DNA</div>
<div class="t" style="top:827.05px;font-size:14px;line-height:14px;left:1512.50px;color:#000;">50.00</div>
<div class="t" style="top:848.05px;font-size:14px;line-height:14px;left:469.40px;color:#000;">3</div>
<div class="t" style="top:848.05px;font-size:14px;line-height:14px;left:510.50px;color:#000;">A01</div>
<div class="t" style="top:848.05px;font-size:14px;line-height:14px;left:611.50px;color:#000;">TP-SSV</div>
<div class="t" style="top:848.05px;font-size:14px;line-height:14px;left:716.50px;color:#000;">19.11.2024 09:19</div>
<div class="t" style="top:848.05px;font-size:14px;line-height:14px;left:844.50px;color:#000;">185.5</div>
<div class="t" style="top:848.05px;font-size:14px;line-height:14px;left:956.50px;color:#000;">ng/&micro;l</div>
<div class="t" style="top:848.05px;font-size:14px;line-height:14px;left:1014.50px;color:#000;">3.709</div>
<div class="t" style="top:848.05px;font-size:14px;line-height:14px;left:1119.50px;color:#000;">1.928</div>
<div class="t" style="top:848.05px;font-size:14px;line-height:14px;left:1224.50px;color:#000;">1.92</div>
<div class="t" style="top:848.05px;font-size:14px;line-height:14px;left:1309.50px;color:#000;">2.36</div>
<div class="t" style="top:848.05px;font-size:14px;line-height:14px;left:1394.50px;color:#000;">DNA</div>
<div class="t" style="top:848.05px;font-size:14px;line-height:14px;left:1512.50px;color:#000;">50.00</div>
<div class="t" style="top:869.05px;font-size:14px;line-height:14px;left:469.40px;color:#000;">4</div>
<div class="t" style="top:869.05px;font-size:14px;line-height:14px;left:510.50px;color:#000;">A02</div>
<div class="t" style="top:869.05px;font-size:14px;line-height:14px;left:611.50px;color:#000;">TP-SSV</div>
<div class="t" style="top:869.05px;font-size:14px;line-height:14px;left:716.50px;color:#000;">19.11.2024 09:20</div>
<div class="t" style="top:869.05px;font-size:14px;line-height:14px;left:844.50px;color:#000;">285.3</div>
<div class="t" style="top:869.05px;font-size:14px;line-height:14px;left:956.50px;color:#000;">ng/&micro;l</div>
<div class="t" style="top:869.05px;font-size:14px;line-height:14px;left:1014.50px;color:#000;">5.707</div>
<div class="t" style="top:869.05px;font-size:14px;line-height:14px;left:1119.50px;color:#000;">2.969</div>
<div class="t" style="top:869.05px;font-size:14px;line-height:14px;left:1224.50px;color:#000;">1.92</div>
<div class="t" style="top:869.05px;font-size:14px;line-height:14px;left:1309.50px;color:#000;">2.26</div>
<div class="t" style="top:869.05px;font-size:14px;line-height:14px;left:1394.50px;color:#000;">DNA</div>
<div class="t" style="top:869.05px;font-size:14px;line-height:14px;left:1512.50px;color:#000;">50.00</div>
<div class="t" style="top:890.05px;font-size:14px;line-height:14px;left:469.40px;color:#000;">5</div>
<div class="t" style="top:890.05px;font-size:14px;line-height:14px;left:510.50px;color:#000;">A04</div>
<div class="t" style="top:890.05px;font-size:14px;line-height:14px;left:611.50px;color:#000;">TP-SSV</div>
<div class="t" style="top:890.05px;font-size:14px;line-height:14px;left:716.50px;color:#000;">19.11.2024 09:26</div>
<div class="t" style="top:890.05px;font-size:14px;line-height:14px;left:844.50px;color:#000;">237.4</div>
<div class="t" style="top:890.05px;font-size:14px;line-height:14px;left:956.50px;color:#000;">ng/&micro;l</div>
<div class="t" style="top:890.05px;font-size:14px;line-height:14px;left:1014.50px;color:#000;">4.747</div>
<div class="t" style="top:890.05px;font-size:14px;line-height:14px;left:1119.50px;color:#000;">2.480</div>
<div class="t" style="top:890.05px;font-size:14px;line-height:14px;left:1224.50px;color:#000;">1.91</div>
<div class="t" style="top:890.05px;font-size:14px;line-height:14px;left:1309.50px;color:#000;">2.32</div>
<div class="t" style="top:890.05px;font-size:14px;line-height:14px;left:1394.50px;color:#000;">DNA</div>
<div class="t" style="top:890.05px;font-size:14px;line-height:14px;left:1512.50px;color:#000;">50.00</div>
<div class="t" style="top:911.05px;font-size:14px;line-height:14px;left:469.40px;color:#000;">6</div>
<div class="t" style="top:911.05px;font-size:14px;line-height:14px;left:510.50px;color:#000;">A03</div>
<div class="t" style="top:911.05px;font-size:14px;line-height:14px;left:611.50px;color:#000;">TP-SSV</div>
<div class="t" style="top:911.05px;font-size:14px;line-height:14px;left:716.50px;color:#000;">19.11.2024 09:27</div>
<div class="t" style="top:911.05px;font-size:14px;line-height:14px;left:844.50px;color:#000;">421.1</div>
<div class="t" style="top:911.05px;font-size:14px;line-height:14px;left:956.50px;color:#000;">ng/&micro;l</div>
<div class="t" style="top:911.05px;font-size:14px;line-height:14px;left:1014.50px;color:#000;">8.423</div>
<div class="t" style="top:911.05px;font-size:14px;line-height:14px;left:1119.50px;color:#000;">4.398</div>
<div class="t" style="top:911.05px;font-size:14px;line-height:14px;left:1224.50px;color:#000;">1.92</div>
<div class="t" style="top:911.05px;font-size:14px;line-height:14px;left:1309.50px;color:#000;">2.29</div>
<div class="t" style="top:911.05px;font-size:14px;line-height:14px;left:1394.50px;color:#000;">DNA</div>
<div class="t" style="top:911.05px;font-size:14px;line-height:14px;left:1512.50px;color:#000;">50.00</div>
<div class="t" style="top:932.05px;font-size:14px;line-height:14px;left:469.40px;color:#fff;">7</div>
<div class="t" style="top:932.05px;font-size:14px;line-height:14px;left:510.50px;color:#fff;">A14</div>
<div class="t" style="top:932.05px;font-size:14px;line-height:14px;left:611.50px;color:#fff;">TP-SSV</div>
<div class="t" style="top:932.05px;font-size:14px;line-height:14px;left:716.50px;color:#fff;">19.11.2024 09:31</div>
<div class="t" style="top:932.05px;font-size:14px;line-height:14px;left:844.50px;color:#fff;">156.1</div>
<div class="t" style="top:932.05px;font-size:14px;line-height:14px;left:956.50px;color:#fff;">ng/&micro;l</div>
<div class="t" style="top:932.05px;font-size:14px;line-height:14px;left:1014.50px;color:#fff;">3.122</div>
<div class="t" style="top:932.05px;font-size:14px;line-height:14px;left:1119.50px;color:#fff;">1.610</div>
<div class="t" style="top:932.05px;font-size:14px;line-height:14px;left:1224.50px;color:#fff;">1.94</div>
<div class="t" style="top:932.05px;font-size:14px;line-height:14px;left:1309.50px;color:#fff;">2.32</div>
<div class="t" style="top:932.05px;font-size:14px;line-height:14px;left:1394.50px;color:#fff;">DNA</div>
<div class="t" style="top:932.05px;font-size:14px;line-height:14px;left:1512.50px;color:#fff;">50.00</div>
<div class="r" style="left:0px;top:780px;width:460px;height:7px;background:linear-gradient(180deg,#f0f0f0 0%,#dadada 30%,#a8a8a8 100%)"></div>
<svg style="left:210px;top:781px" width="42" height="4"><rect x="0" y="1" width="2" height="2" fill="#8a8a8a"/><rect x="4" y="1" width="2" height="2" fill="#8a8a8a"/><rect x="8" y="1" width="2" height="2" fill="#8a8a8a"/><rect x="12" y="1" width="2" height="2" fill="#8a8a8a"/><rect x="16" y="1" width="2" height="2" fill="#8a8a8a"/><rect x="20" y="1" width="2" height="2" fill="#8a8a8a"/><rect x="24" y="1" width="2" height="2" fill="#8a8a8a"/><rect x="28" y="1" width="2" height="2" fill="#8a8a8a"/><rect x="32" y="1" width="2" height="2" fill="#8a8a8a"/><rect x="36" y="1" width="2" height="2" fill="#8a8a8a"/></svg>
<div class="r" style="left:0px;top:787px;width:460px;height:191px;background:#f4f4f4"></div>
<div class="r" style="left:1px;top:787px;width:457px;height:30px;background:linear-gradient(180deg,#ffffff 0%,#fdfdfd 60%,#f7f7f7 100%);border:1px solid #d9d9d9;border-radius:4px"></div>
<div class="t" style="top:797.59px;font-size:11px;line-height:11px;letter-spacing:0.479px;left:50.20px;font-weight:bold;color:#0a0a0a;">Home</div>
<div class="r" style="left:1px;top:819px;width:458px;height:30px;background:#cce4f7;border:1px solid #1e5d8c;border-radius:4px"></div>
<div class="t" style="top:829.59px;font-size:11px;line-height:11px;letter-spacing:0.280px;left:50.20px;font-weight:bold;color:#0a0a0a;">Measure Nucleic Acid</div>
<div class="r" style="left:1px;top:851px;width:457px;height:30px;background:linear-gradient(180deg,#ffffff 0%,#fdfdfd 60%,#f7f7f7 100%);border:1px solid #d9d9d9;border-radius:4px"></div>
<div class="t" style="top:861.59px;font-size:11px;line-height:11px;letter-spacing:0.326px;left:50.20px;font-weight:bold;color:#0a0a0a;">Reports</div>
<div class="r" style="left:1px;top:883px;width:457px;height:30px;background:linear-gradient(180deg,#ffffff 0%,#fdfdfd 60%,#f7f7f7 100%);border:1px solid #d9d9d9;border-radius:4px"></div>
<div class="t" style="top:893.59px;font-size:11px;line-height:11px;letter-spacing:0.330px;left:50.20px;font-weight:bold;color:#0a0a0a;">My Data</div>
<div class="r" style="left:1px;top:915px;width:457px;height:30px;background:linear-gradient(180deg,#ffffff 0%,#fdfdfd 60%,#f7f7f7 100%);border:1px solid #d9d9d9;border-radius:4px"></div>
<div class="t" style="top:925.59px;font-size:11px;line-height:11px;letter-spacing:0.284px;left:50.20px;font-weight:bold;color:#0a0a0a;">Oligo Calc</div>
<div class="r" style="left:1px;top:947px;width:457px;height:30px;background:linear-gradient(180deg,#ffffff 0%,#fdfdfd 60%,#f7f7f7 100%);border:1px solid #d9d9d9;border-radius:4px"></div>
<div class="t" style="top:957.59px;font-size:11px;line-height:11px;letter-spacing:0.325px;left:50.20px;font-weight:bold;color:#0a0a0a;">Options</div>
<svg style="left:0;top:787px" width="45" height="195">
<defs>
<linearGradient id="hw" x1="0" y1="0" x2="1" y2="0"><stop offset="0" stop-color="#ffffff"/><stop offset="1" stop-color="#d6dde4"/></linearGradient>
<linearGradient id="hroof" x1="0" y1="0" x2="0" y2="1"><stop offset="0" stop-color="#f0a040"/><stop offset="1" stop-color="#c87418"/></linearGradient>
<linearGradient id="silv" x1="0" y1="0" x2="1" y2="1"><stop offset="0" stop-color="#ffffff"/><stop offset="1" stop-color="#a8a8a8"/></linearGradient>
<linearGradient id="calc" x1="0" y1="0" x2="1" y2="1"><stop offset="0" stop-color="#8cc0f0"/><stop offset="1" stop-color="#3a78c0"/></linearGradient>
</defs>
<!-- home -->
<path d="M9.4 18.3 L13.7 16.8 L23.9 23.3 L36.9 19.7 L23.9 25.9 L19.5 25.5 Z" fill="#1c5f8c"/>
<path d="M13.7 8.9 L23.9 13.2 L23.9 23.3 L13.7 19 Z" fill="#5aa2d4"/>
<path d="M23.9 13.2 L36.9 9.9 L36.9 20.4 L23.9 23.3 Z" fill="url(#hw)"/>
<path d="M12.3 8.1 L17 3.8 L31.8 4.9 L37.6 9.6 L23.9 13.2 Z" fill="url(#hroof)"/>
<rect x="17" y="2.6" width="2.5" height="2.6" fill="#b06010"/>
<path d="M28.2 15.5 L31.1 14.8 L31.1 21.9 L28.2 22.5 Z" fill="#1c5f8c"/>
<rect x="16.3" y="12.8" width="2.5" height="3.2" fill="#1c4f74"/>
<!-- tape measure -->
<g transform="translate(0,32)">
<path d="M10 18 L14 21.5 L22 20 L19 16 Z" fill="#1a1a1a"/>
<ellipse cx="17.3" cy="11.6" rx="7.2" ry="9.4" fill="url(#silv)" stroke="#9a9a9a" stroke-width="0.6"/>
<ellipse cx="15.6" cy="11.6" rx="3.6" ry="6.6" fill="#f8f8f8" stroke="#b4b4b4" stroke-width="0.8"/>
<path d="M21 4.5 L25.3 6.5 L25.3 14.6 L21 13 Z" fill="#e8c030"/>
<path d="M20.3 16.6 L33 21.5 L37.6 23.9 L33 26.5 L19.5 20.5 Z" fill="#f0d048"/>
<path d="M31.8 23.2 L37.6 23.9 L37.6 26.8 L31.8 26.3 Z" fill="#d8d8d8"/>
</g>
<!-- reports -->
<g transform="translate(0,64)">
<rect x="14.5" y="3.5" width="15.9" height="18.1" rx="1" fill="#e83844" stroke="#8c1820" stroke-width="0.7"/>
<rect x="20.3" y="7.4" width="16.2" height="19.2" rx="1" fill="#f04650" stroke="#8c1820" stroke-width="0.7"/>
<rect x="25" y="11.8" width="6.1" height="3.2" rx="0.8" fill="#fff"/>
<path d="M13 6 H16.5 M13 8.6 H16.5 M13 11.2 H16.5 M13 13.8 H16.5 M13 16.4 H16.5 M13 19 H16.5 M19 10 H22.3 M19 12.8 H22.3 M19 15.6 H22.3 M19 18.4 H22.3 M19 21.2 H22.3 M19 24 H22.3" stroke="#2a2a2a" stroke-width="1"/>
</g>
<!-- my data -->
<g transform="translate(0,96)">
<path d="M11.4 24 L18.3 21 L18.3 26.7 L14 26.7 Z" fill="#2a3440"/>
<path d="M14.5 3.5 L18.3 2.3 L18.3 26.7 L14.5 24.5 Z" fill="#4a5a70"/>
<rect x="18.3" y="2.3" width="15.2" height="12.5" fill="#b4c0d0" stroke="#6a788a" stroke-width="0.6"/>
<rect x="23.6" y="6.3" width="4.6" height="1.8" fill="#f4f6f8"/>
<path d="M22 11 L26 10.3 L34.3 11 L34.3 15.3 L22 15.3 Z" fill="#f2d060"/>
<rect x="18.3" y="14.5" width="18.3" height="11.8" fill="#b8c4d4" stroke="#6a788a" stroke-width="0.6"/>
<rect x="27.4" y="18.7" width="4.6" height="1.5" fill="#f4f6f8"/>
<rect x="27.4" y="21.5" width="4.6" height="1" fill="#7a8898"/>
</g>
<!-- oligo calc -->
<g transform="translate(0,128)">
<path d="M27 1 Q35 8 28 16 Q23 22 28 28 M37 1 Q29 8 36 16 Q41 22 36 28" fill="none" stroke="#f07828" stroke-width="2.6"/>
<path d="M29 5 H35 M31 11 H33.5 M31 21 H33.5 M29 26.5 H35" stroke="#3a6ab8" stroke-width="1.4"/>
<path d="M9.1 9.2 L25.2 2.3 L35.1 19.9 L18.3 27.5 Z" fill="url(#calc)" stroke="#2a5a98" stroke-width="0.8"/>
<path d="M12.8 9.2 L22.8 4.8 L25.3 9.2 L15.2 13.5 Z" fill="#e8f4ff"/>
<g fill="#f0f8ff"><path d="M16 15.5 l2.4 -1 l0.8 1.5 l-2.4 1 Z"/><path d="M20 13.8 l2.4 -1 l0.8 1.5 l-2.4 1 Z"/><path d="M24 12.1 l2.4 -1 l0.8 1.5 l-2.4 1 Z"/><path d="M17.6 18.6 l2.4 -1 l0.8 1.5 l-2.4 1 Z"/><path d="M21.6 16.9 l2.4 -1 l0.8 1.5 l-2.4 1 Z"/><path d="M25.6 15.2 l2.4 -1 l0.8 1.5 l-2.4 1 Z"/><path d="M19.2 21.7 l2.4 -1 l0.8 1.5 l-2.4 1 Z"/><path d="M23.2 20 l2.4 -1 l0.8 1.5 l-2.4 1 Z"/></g>
</g>
<!-- options -->
<g transform="translate(0,160)">
<rect x="12.2" y="6.2" width="18.3" height="17.5" fill="#cfe2f2" stroke="#50708c" stroke-width="0.8"/>
<circle cx="17.9" cy="5.4" r="3.4" fill="#c8e0f4" stroke="#6a8cac" stroke-width="0.7"/>
<circle cx="17.5" cy="15" r="3.5" fill="#2a9a3a" stroke="#1a5a22" stroke-width="0.6"/>
<circle cx="16.7" cy="14" r="1.2" fill="#a8e8b0"/>
<circle cx="17.9" cy="24" r="3.4" fill="#c8e0f4" stroke="#6a8cac" stroke-width="0.7"/>
<path d="M20 13.5 L22.5 12 L25 15 L36 4.5 L38 6.5 L25.5 19 Z" fill="#e0101a" stroke="#8a0a10" stroke-width="0.5"/>
</g>
</svg>
<div class="r" style="left:0px;top:978px;width:460px;height:32px;background:linear-gradient(180deg,#f8f8f8,#efefef);border:1px solid #8a8a8a;border-right-color:#a0a0a0"></div>
<svg style="left:438px;top:985px" width="14" height="16"><path d="M2.3 3.3 L5.8 6.3 L2.3 9.6 M6.6 3.3 L10.1 6.3 L6.6 9.6" fill="none" stroke="#111" stroke-width="1.6"/><path d="M4 11.8 L9.1 11.8 L6.55 15 Z" fill="#111"/></svg>
<div class="r" style="left:460px;top:1010px;width:1460px;height:1px;background:#d4d4da"></div>
<div class="r" style="left:0px;top:1011px;width:1920px;height:21px;background:#f0f0f0"></div>
<div class="r" style="left:0px;top:1010px;width:460px;height:1px;background:#f0f0f0"></div>
<div class="r" style="left:0px;top:1032px;width:1920px;height:1px;background:#c9ced6"></div>
<svg style="left:51px;top:1012px" width="18" height="18"><path d="M9 0.8 L16.5 3 Q17 11 9 16.5 Q1 11 1.5 3 Z" fill="#4a9a5a" stroke="#7a8a80" stroke-width="1"/><path d="M5 8.5 L8 11 L13 5.5" fill="none" stroke="#fff" stroke-width="1.8"/></svg>
<div class="t" style="top:1016.29px;font-size:11px;line-height:11px;letter-spacing:-0.746px;margin-right:0.746px;right:18.40px;text-align:right;color:#111;">TP-SSV</div>
<div class="r" style="left:0px;top:1033px;width:1920px;height:47px;background:linear-gradient(90deg,#e3edf8 0%,#e1e9f7 18%,#d7e3f8 23%,#d9ddf4 30%,#d9dff4 50%,#d6e0f5 65%,#d7d9ee 71%,#dde3f2 76%,#e2ecf8 80%,#e3edf8 100%)"></div>
<svg style="left:0;top:1033px" width="1920" height="47">
<defs>
<linearGradient id="win" x1="0" y1="0" x2="1" y2="1"><stop offset="0" stop-color="#3ccdfa"/><stop offset="1" stop-color="#0a6fd8"/></linearGradient>
<linearGradient id="coin" x1="0" y1="0" x2="0" y2="1"><stop offset="0" stop-color="#ffc640"/><stop offset="1" stop-color="#f08a10"/></linearGradient>
<linearGradient id="edge" x1="0" y1="0" x2="1" y2="1"><stop offset="0" stop-color="#35c1f1"/><stop offset="0.5" stop-color="#1b8fe0"/><stop offset="1" stop-color="#0c59a4"/></linearGradient>
<linearGradient id="fold" x1="0" y1="0" x2="0" y2="1"><stop offset="0" stop-color="#ffd54a"/><stop offset="1" stop-color="#f4b400"/></linearGradient>
</defs>
<!-- coins -->
<ellipse cx="30" cy="13.5" rx="9" ry="3.5" fill="url(#coin)"/>
<ellipse cx="32" cy="19" rx="10" ry="3.8" fill="url(#coin)"/>
<ellipse cx="29" cy="23.5" rx="9.5" ry="3.5" fill="url(#coin)"/>
<path d="M26.5 29 L31 33 L35.5 29 L35.5 31 L31 35 L26.5 31 Z" fill="#c8401c"/>
<!-- windows logo -->
<rect x="705" y="11.8" width="11" height="11" fill="url(#win)"/>
<rect x="717" y="11.8" width="11" height="11" fill="url(#win)"/>
<rect x="705" y="23.8" width="11" height="11" fill="url(#win)"/>
<rect x="717" y="23.8" width="11" height="11" fill="url(#win)"/>
<!-- search pill -->
<rect x="741.5" y="8.5" width="218.5" height="30" rx="15" fill="#f6f9fd" stroke="#d6dde8" stroke-width="1"/>
<circle cx="759" cy="21.8" r="5.3" fill="none" stroke="#1a1a1a" stroke-width="1.7"/>
<line x1="762.8" y1="25.6" x2="767" y2="29.8" stroke="#1a1a1a" stroke-width="1.8"/>
<!-- manatee -->
<defs><linearGradient id="mana" x1="0" y1="0" x2="0" y2="1"><stop offset="0" stop-color="#b0a8bc"/><stop offset="1" stop-color="#74727c"/></linearGradient>
<linearGradient id="weed" x1="0" y1="0" x2="0" y2="1"><stop offset="0" stop-color="#c4e060"/><stop offset="1" stop-color="#7cb820"/></linearGradient>
<linearGradient id="appbg" x1="0" y1="0" x2="1" y2="0"><stop offset="0" stop-color="#c8d4ec"/><stop offset="1" stop-color="#6078b8"/></linearGradient>
<linearGradient id="palette" x1="0" y1="0" x2="0" y2="1"><stop offset="0" stop-color="#5ccaf4"/><stop offset="1" stop-color="#1a8ed8"/></linearGradient>
<linearGradient id="edgeg" x1="1" y1="0" x2="0" y2="1"><stop offset="0" stop-color="#6ad45a"/><stop offset="0.35" stop-color="#2cb8c8"/><stop offset="1" stop-color="#0c5aa8"/></linearGradient>
</defs>
<path d="M912.5 35.3 Q911.5 28 914 21.8 Q915 25 915.5 27 Q917 24 918 22.5 Q918.5 30 918 35.3 Z" fill="url(#weed)"/>
<path d="M918.75 15.5 Q923 12.5 929.2 12.9 Q935.5 13.5 939.6 16 Q943 17.8 944.8 20.2 Q946.8 23 948.4 25.9 Q951 26.3 952.6 27.5 Q952.5 31 950 32.7 Q947.5 32.3 945.8 30.6 Q944.5 28.8 943.2 28 Q940 28.8 936.5 28.5 Q933 28.5 930.2 27.5 Q929 29.5 927.1 30.1 Q924 30.8 921.9 29.6 Q922 26.5 923.4 24.9 Q921.5 24.8 920.8 23.8 Q917.5 21.5 917.2 18.6 Q917.3 16.5 918.75 15.5 Z" fill="url(#mana)"/>
<circle cx="922.8" cy="16.8" r="0.9" fill="#333"/>
<!-- task view -->
<rect x="979.2" y="12.1" width="16.9" height="15.1" rx="1" fill="#fafafa" stroke="#e0e4ea" stroke-width="0.6"/>
<rect x="973.2" y="18.1" width="17.7" height="15.6" rx="1.2" fill="#262626"/>
<rect x="979.2" y="18.1" width="11.7" height="9.1" fill="#c4c4c4"/>
<!-- edge -->
<defs><linearGradient id="edgeb" x1="0" y1="0" x2="0" y2="1"><stop offset="0" stop-color="#2a9ee6"/><stop offset="1" stop-color="#0a52a4"/></linearGradient>
<linearGradient id="edgegr" x1="0" y1="0" x2="1" y2="0.6"><stop offset="0" stop-color="#28b0d8"/><stop offset="1" stop-color="#62d85c"/></linearGradient></defs>
<circle cx="1073" cy="22.7" r="12.2" fill="url(#edgeb)"/>
<path d="M1062 21 Q1064 10.5 1074 10.5 Q1084.5 11 1085.2 21.5 Q1085.3 27.5 1079 28 Q1074.5 28 1073.5 25 Q1077.5 24.5 1077.5 21.5 Q1077 17.5 1071.5 17.8 Q1065.5 18.3 1062 21 Z" fill="url(#edgegr)"/>
<ellipse cx="1072.8" cy="23.2" rx="3.2" ry="2.7" fill="#dde6f5"/>
<path d="M1073 25.5 Q1077 29.5 1085 27.5 Q1083.5 31.5 1079.5 34 Q1075 31 1073 25.5 Z" fill="#dde6f5"/>
<!-- folder -->
<path d="M1104.6 12.5 Q1104.6 11.4 1105.8 11.4 L1111.5 11.4 L1113.5 13.8 L1104.6 13.8 Z" fill="#e2a400"/>
<rect x="1104.6" y="13.8" width="24.3" height="19.3" rx="1" fill="#f7c43a"/>
<rect x="1104.6" y="16" width="24.3" height="17.1" rx="1" fill="#ffd454"/>
<path d="M1109.9 33.1 L1109.9 28.2 Q1109.9 26.9 1111.2 26.9 L1121.9 26.9 Q1123.2 26.9 1123.2 28.2 L1123.2 33.1 Z" fill="#1d7fd6"/>
<rect x="1113.9" y="39.3" width="6.2" height="2.7" rx="1.35" fill="#6b6f7a"/>
<!-- active app -->
<rect x="1142.2" y="4.3" width="37.6" height="37.7" rx="4" fill="#f0f3fa"/>
<rect x="1148.9" y="11" width="24.3" height="23.9" fill="url(#appbg)"/>
<rect x="1150.8" y="12.3" width="20.5" height="6.3" rx="3" fill="#050508"/>
<rect x="1150.3" y="26.9" width="21.2" height="6.3" rx="3" fill="#050508"/>
<path d="M1153 18.5 L1169 18.5 L1165.5 22.8 L1169 26.9 L1153 26.9 L1156.5 22.8 Z" fill="#3a48a0"/>
<ellipse cx="1160.7" cy="22.8" rx="2" ry="1.1" fill="#b8c8f0"/>
<rect x="1153.3" y="38.9" width="15.5" height="3.1" rx="1.55" fill="#0a67c4"/>
<!-- paint -->
<path d="M1205 11.4 Q1216.5 11.8 1216.1 21 Q1215.5 25.5 1211.5 25 Q1208.5 25 1209.5 29 Q1210.5 34.4 1204.5 34.4 Q1193.6 33.5 1193.6 23 Q1194 11.4 1205 11.4 Z" fill="url(#palette)"/>
<circle cx="1197.6" cy="23.4" r="1.7" fill="#e8503a"/>
<circle cx="1200.2" cy="18" r="1.7" fill="#3cb84a"/>
<circle cx="1205.5" cy="16.3" r="1.7" fill="#f0d030"/>
<path d="M1205.5 22.6 L1206 24 L1207.2 24.2 L1206 24.5 L1205.5 25.8 L1205 24.5 L1203.8 24.2 L1205 24 Z" fill="#fff"/>
<rect x="1210.3" y="22" width="2.4" height="12.4" fill="#9a6a30"/>
<path d="M1209.4 19.4 L1213.6 19.4 L1213 22.5 L1210 22.5 Z" fill="#e8e0d0"/>
<rect x="1202" y="39.3" width="5.7" height="2.7" rx="1.35" fill="#6b6f7a"/>
<!-- tray chevron -->
<path d="M1689.8 26 L1695 20.5 L1700.2 26" fill="none" stroke="#222" stroke-width="1.3"/>
<!-- network -->
<rect x="1763" y="15.5" width="13" height="11" fill="none" stroke="#1a1a1a" stroke-width="1.1"/>
<path d="M1766 30.5 H1775 M1770 26.5 V30.5" stroke="#1a1a1a" stroke-width="1.1"/>
<rect x="1775" y="13.5" width="4" height="5" rx="1" fill="#f0f4fa" stroke="#1a1a1a" stroke-width="1"/>
<line x1="1777" y1="18.5" x2="1777" y2="30" stroke="#1a1a1a" stroke-width="1"/>
<!-- volume -->
<path d="M1787.5 20.5 H1790.5 L1794.5 16.5 V28.5 L1790.5 24.5 H1787.5 Z" fill="none" stroke="#1a1a1a" stroke-width="1"/>
<path d="M1797 19.5 Q1799 22.5 1797 25.5 M1799.5 17.5 Q1803 22.5 1799.5 27.5 M1802 15.5 Q1807 22.5 1802 29.5" fill="none" stroke="#1a1a1a" stroke-width="1"/>
<!-- bell -->
<path d="M1886 28 Q1888 26 1888 21 Q1888 15.5 1892.2 15.5 Q1896.5 15.5 1896.5 21 Q1896.5 26 1898.5 28 Z" fill="#003e92"/>
<rect x="1890" y="29" width="4.5" height="2" rx="1" fill="#003e92"/>
</svg>
<div class="t" style="top:1042.59px;font-size:11px;line-height:11px;letter-spacing:-0.343px;left:50.60px;color:#1a1a1a;">GBP/JPY</div>
<div class="t" style="top:1058.79px;font-size:11px;line-height:11px;letter-spacing:0.289px;left:50.60px;color:#c42b1c;">-0.36%</div>
<div class="t" style="top:1049.65px;font-size:14px;line-height:14px;letter-spacing:-0.832px;left:778.30px;color:#5a5a5a;">Search</div>
<div class="t" style="top:1051.59px;font-size:11px;line-height:11px;left:1721.25px;color:#1a1a1a;">ENG</div>
<div class="t" style="top:1042.51px;font-size:11.5px;line-height:11.5px;right:43.00px;text-align:right;color:#1a1a1a;">09:31</div>
<div class="t" style="top:1058.06px;font-size:11.5px;line-height:11.5px;right:43.00px;text-align:right;color:#1a1a1a;">19.11.2024</div>
</body></html>
